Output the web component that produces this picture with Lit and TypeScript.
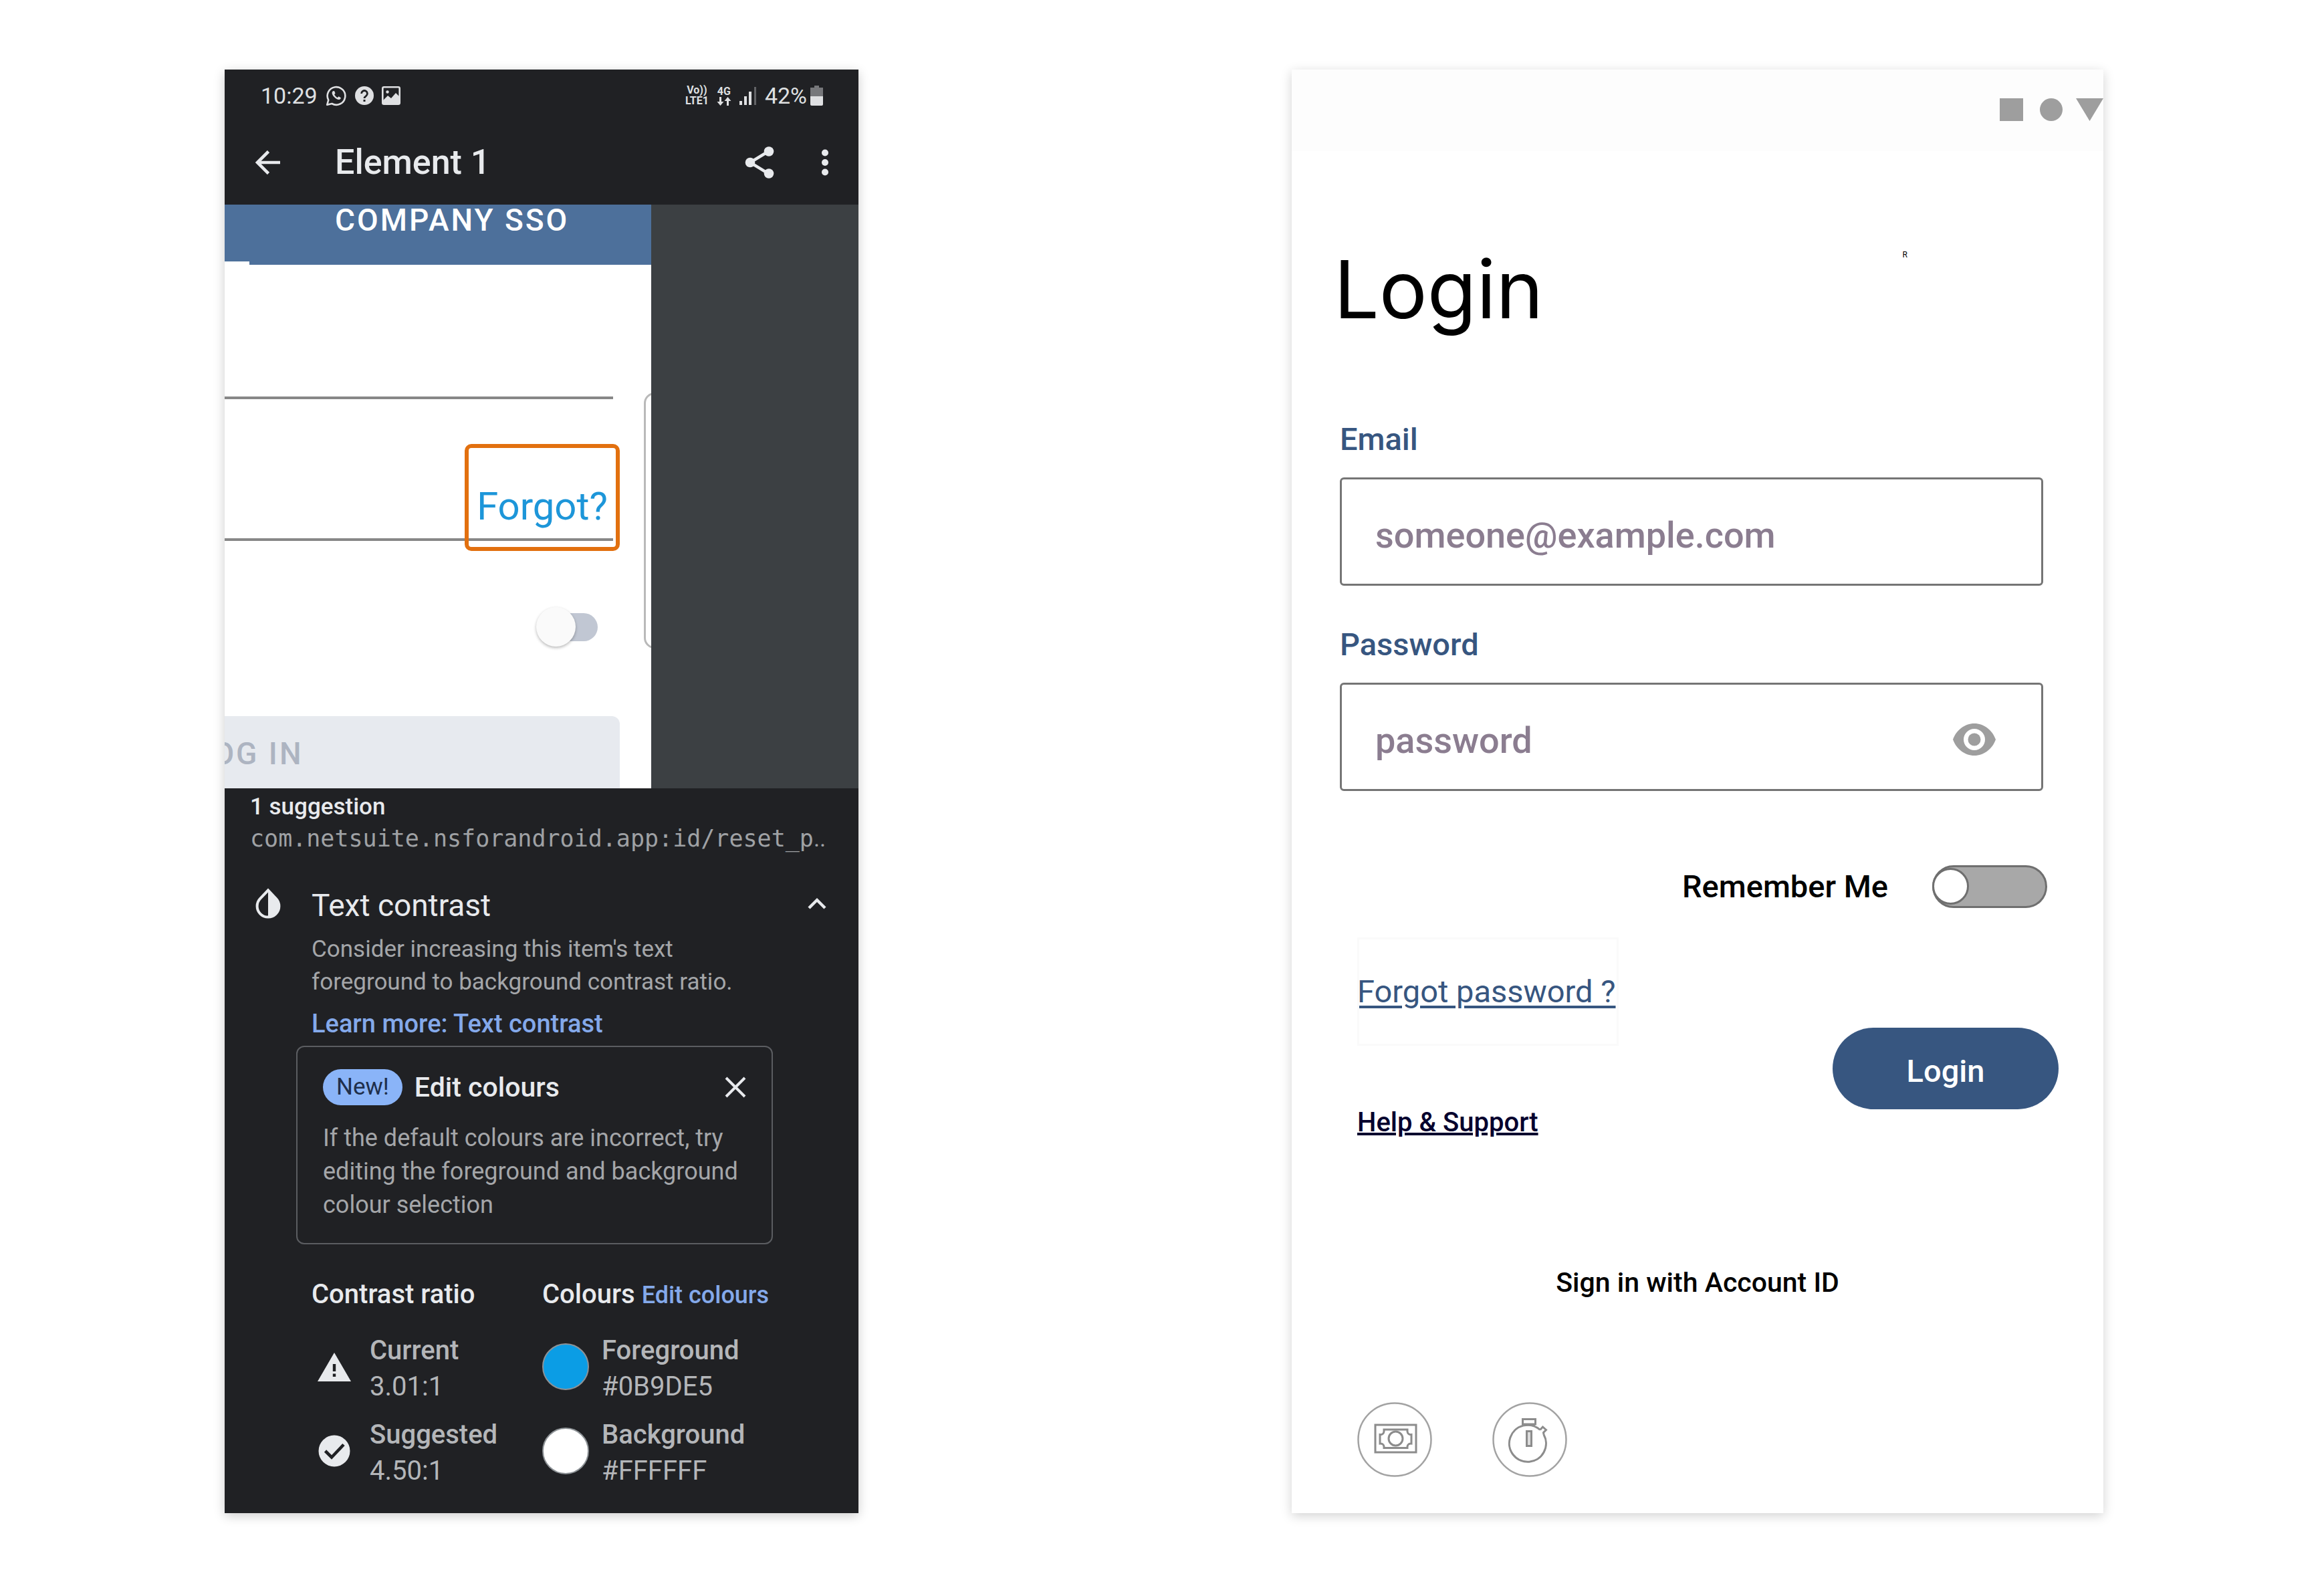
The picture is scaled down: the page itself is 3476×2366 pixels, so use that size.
import { LitElement, html, css, svg } from "lit";
import { customElement } from "lit/decorators.js";

const resets = css`
  :host {
    display: block;
    box-sizing: border-box;
    font-family: Roboto, "Liberation Sans", sans-serif;
  }
  *,
  *::before,
  *::after {
    box-sizing: border-box;
  }
  h1,
  h2,
  h3,
  p,
  dl,
  dd {
    margin: 0;
  }
  button {
    font: inherit;
    color: inherit;
    margin: 0;
    padding: 0;
    border: 0;
    background: none;
    cursor: pointer;
  }
  svg {
    display: block;
    flex: none;
  }
`;

const icons = {
  chat: svg`<svg width="32" height="32" viewBox="0 0 32 32" fill="none" stroke="currentColor" stroke-width="2.6" stroke-linejoin="round" aria-hidden="true">
    <path d="M2.2 29.8l2-7.2A13.3 13.3 0 1 1 9.4 28z"/>
    <path d="M11.2 9.2c-2.400 1.200-2 5 1.600 8.800s7.600 5.200 9.600 2.800l.5-1.500-3.300-2-1.800 1.600c-2-.8-3.700-2.600-4.700-4.700l1.400-1.700-1.500-3.400z" fill="currentColor" stroke="none"/>
  </svg>`,
  help: svg`<svg width="28" height="28" viewBox="0 0 28 28" aria-hidden="true">
    <circle cx="14" cy="14" r="14" fill="currentColor"/>
    <path d="M9.600 11a4.400 4.400 0 1 1 6.900 3.600c-1.600 1.100-2.500 1.700-2.500 3.400" fill="none" stroke="#202124" stroke-width="2.800"/>
    <rect x="12.500" y="20" width="3" height="3" fill="#202124"/>
  </svg>`,
  picture: svg`<svg width="28" height="28" viewBox="0 0 28 28" aria-hidden="true">
    <rect x="1.300" y="1.300" width="25.400" height="25.400" rx="2" fill="none" stroke="currentColor" stroke-width="2.600"/>
    <path d="M2 21l7-7 5 4 7-8 6 6v10H2z" fill="currentColor"/>
    <circle cx="8.500" cy="8.500" r="2.200" fill="currentColor"/>
  </svg>`,
  data: svg`<svg width="22" height="13" viewBox="0 0 22 13" fill="currentColor" aria-hidden="true">
    <path d="M4 0h3v7h3.500L5.500 13 0.500 7H4zM15 13h3V6h3.500L16.500 0 11.500 6H15z"/>
  </svg>`,
  signal: svg`<svg width="26" height="27" viewBox="0 0 26 27" fill="currentColor" aria-hidden="true">
    <rect x="0" y="21" width="4" height="6"/><rect x="7" y="14" width="4" height="13"/>
    <rect x="14" y="7" width="4" height="20"/><rect x="22" y="0" width="3" height="27" opacity=".35"/>
  </svg>`,
  battery: svg`<svg width="19" height="30" viewBox="0 0 19 30" aria-hidden="true">
    <path d="M6 0h7v3h6v14H0V3h6z" fill="#77787b"/><path d="M0 16h19v12q0 2-2 2H2q-2 0-2-2z" fill="currentColor"/>
  </svg>`,
  back: svg`<svg width="38" height="36" viewBox="0 0 38 36" fill="none" stroke="currentColor" stroke-width="4.600" aria-hidden="true">
    <path d="M37 18H3M19.500 1.500L3 18l16.500 16.500"/>
  </svg>`,
  share: svg`<svg width="44" height="48" viewBox="0 0 44 48" aria-hidden="true">
    <path d="M36 7L8 24l28 17" fill="none" stroke="currentColor" stroke-width="4.400"/>
    <g fill="currentColor"><circle cx="36" cy="7.500" r="7.300"/><circle cx="8" cy="24" r="7.300"/><circle cx="36" cy="40.500" r="7.300"/></g>
  </svg>`,
  more: svg`<svg width="12" height="40" viewBox="0 0 12 40" fill="currentColor" aria-hidden="true">
    <circle cx="6" cy="5.500" r="5"/><circle cx="6" cy="20" r="5"/><circle cx="6" cy="34.500" r="5"/>
  </svg>`,
  contrast: svg`<svg width="38" height="46" viewBox="0 0 38 46" aria-hidden="true">
    <path d="M19 3.500L7.400 15.600a16.400 16.400 0 1 0 23.200 0z" fill="none" stroke="currentColor" stroke-width="4"/>
    <path d="M19 3v41a17 17 0 0 0 12-28z" fill="currentColor"/>
  </svg>`,
  collapse: svg`<svg width="28" height="18" viewBox="0 0 28 18" fill="none" stroke="currentColor" stroke-width="4.400" aria-hidden="true">
    <path d="M2 16L14 4l12 12"/>
  </svg>`,
  close: svg`<svg width="32" height="32" viewBox="0 0 32 32" fill="none" stroke="currentColor" stroke-width="4" aria-hidden="true">
    <path d="M2 2l28 28M30 2L2 30"/>
  </svg>`,
  warning: svg`<svg width="50" height="43" viewBox="0 0 50 43" aria-hidden="true">
    <path d="M25 0l25 43H0z" fill="currentColor"/>
    <path d="M22.800 17h4.400v11h-4.400zM22.800 31.500h4.400v4.400h-4.400z" fill="#202124"/>
  </svg>`,
  check: svg`<svg width="48" height="48" viewBox="0 0 48 48" aria-hidden="true">
    <circle cx="24" cy="24" r="23.500" fill="currentColor"/>
    <path d="M10.500 24l9.500 9.500L38 14.500" fill="none" stroke="#202124" stroke-width="4.600"/>
  </svg>`,
  eye: svg`<svg width="64" height="48" viewBox="0 0 64 48" aria-hidden="true">
    <path d="M32 0C17.500 0 5 9.900 0 24c5 14.100 17.500 24 32 24s27-9.900 32-24C59 9.900 46.500 0 32 0zm0 40a16 16 0 1 1 0-32 16 16 0 0 1 0 32z" fill="currentColor"/>
    <circle cx="32" cy="24" r="9.500" fill="currentColor"/>
  </svg>`,
  cash: svg`<svg width="112" height="112" viewBox="0 0 112 112" fill="none" stroke="#8c8c8c" stroke-width="3" aria-hidden="true">
    <circle cx="56" cy="56" r="54.500" stroke="#a3a3a3" stroke-width="2.500"/>
    <rect x="27" y="34" width="61" height="41"/>
    <path d="M40 41h35v3a5 5 0 0 0 6 4.500V62a5 5 0 0 0-6 4.500V68.500H40v-2A5 5 0 0 0 34 62V48.500a5 5 0 0 0 6-4.500z"/>
    <circle cx="57.500" cy="54.500" r="10.500"/>
  </svg>`,
  timer: svg`<svg width="112" height="112" viewBox="0 0 112 112" fill="none" stroke="#8c8c8c" stroke-width="3" aria-hidden="true">
    <circle cx="56" cy="56" r="54.500" stroke="#a3a3a3" stroke-width="2.500"/>
    <rect x="45.500" y="25.500" width="19" height="7.500"/>
    <path d="M71.500 41.500A27.500 27.500 0 1 0 77 48.500M71.500 41.500l4-4.500 5 4.500-4 4 .5 3"/>
    <path d="M46 34h18"/>
    <rect x="51.500" y="43.500" width="7" height="22" fill="#dcdcdc"/>
  </svg>`,
};

/** Zoomed view of the inspected screen with the flagged item outlined. */
@customElement("inspected-screen")
class InspectedScreen extends LitElement {
  static styles = [
    resets,
    css`
      :host {
        background: #3c4043;
        overflow: hidden;
      }
      .screen {
        position: relative;
        width: 67.3%;
        height: 873px;
        overflow: hidden;
        background: #fff;
        display: flex;
        flex-direction: column;
      }
      .tab {
        position: relative;
        flex: none;
        height: 90px;
        padding-left: 165px;
        background: #4d709b;
        color: #fff;
        font-size: 46px;
        line-height: 46px;
        font-weight: 500;
        letter-spacing: 3px;
        white-space: nowrap;
      }
      .tab::after {
        content: "";
        position: absolute;
        left: 0;
        bottom: 0;
        width: 37px;
        height: 5px;
        background: #fff;
      }
      .line {
        flex: none;
        margin-right: 57px;
        border-bottom: 4px solid #878787;
      }
      .user {
        height: 201px;
      }
      .secret {
        height: 212px;
      }
      .flagged {
        position: absolute;
        top: 358px;
        right: 47px;
        width: 232px;
        height: 160px;
        padding-top: 26px;
        border: 6px solid #e2700f;
        border-radius: 10px;
        color: #1d96d9;
        font-size: 58px;
        line-height: 64px;
        text-align: center;
      }
      .neighbour {
        position: absolute;
        top: 281px;
        left: 627px;
        width: 60px;
        height: 383px;
        border: 3px solid #b9b9b9;
        border-radius: 16px;
      }
      .switch {
        appearance: none;
        flex: none;
        align-self: flex-end;
        position: relative;
        width: 86px;
        height: 42px;
        margin: 108px 80px 0 0;
        border-radius: 21px;
        background: #c1c7d3;
      }
      .switch::before {
        content: "";
        position: absolute;
        left: -6px;
        top: -9px;
        width: 59px;
        height: 59px;
        border-radius: 50%;
        background: #fafafa;
        box-shadow: 0 2px 4px rgba(0, 0, 0, 0.28);
      }
      .submit {
        flex: 1;
        margin: 112px 47px 0 -60px;
        padding: 4px 0 0 16px;
        border-radius: 12px 12px 0 0;
        background: #e7eaef;
        color: #adb4c1;
        font-size: 46px;
        line-height: 50px;
        font-weight: 500;
        letter-spacing: 3px;
        text-align: left;
      }
    `,
  ];

  render() {
    return html`
      <div class="screen">
        <div class="tab">COMPANY SSO</div>
        <div class="line user"></div>
        <div class="line secret"></div>
        <input class="switch" type="checkbox" role="switch" aria-label="Remember" />
        <button class="submit">LOG IN</button>
        <button class="flagged">Forgot?</button>
        <div class="neighbour"></div>
      </div>
    `;
  }
}

/** Accessibility scanner result for one element. */
@customElement("scanner-phone")
class ScannerPhone extends LitElement {
  static styles = [
    resets,
    css`
      :host {
        background: #202124;
        color: #e8eaed;
        box-shadow: 0 4px 16px rgba(0, 0, 0, 0.2);
      }
      .status {
        display: flex;
        align-items: center;
        gap: 12px;
        height: 78px;
        padding: 0 53px 0 54px;
        font-size: 34px;
        color: #dfe0e2;
      }
      .spacer {
        flex: 1;
      }
      .network {
        display: flex;
        flex-direction: column;
        align-items: center;
        font-size: 16px;
        line-height: 16px;
        font-weight: 700;
      }
      .charge {
        display: flex;
        align-items: center;
        gap: 5px;
      }
      .appbar {
        display: flex;
        align-items: center;
        height: 124px;
        padding: 0 44px 2px 46px;
      }
      .title {
        flex: 1;
        padding-left: 81px;
        font-size: 52px;
        line-height: 60px;
        font-weight: 500;
      }
      .appbar .overflow {
        margin-left: 70px;
      }
      .details {
        padding: 4px 48px 36px 38px;
      }
      .count {
        font-size: 35px;
        line-height: 48px;
        font-weight: 500;
      }
      .resource {
        font-family: "DejaVu Sans Mono", monospace;
        font-size: 35px;
        line-height: 46px;
        color: #9fa1a4;
        white-space: nowrap;
      }
      .cut {
        font-family: Roboto, sans-serif;
      }
      .issue {
        display: flex;
        align-items: center;
        margin-top: 46px;
        padding-left: 8px;
      }
      .issue svg {
        margin-bottom: 6px;
      }
      .issue-name {
        flex: 1;
        padding-left: 46px;
        font-size: 46px;
        line-height: 60px;
        font-weight: 400;
      }
      .body {
        padding-left: 92px;
      }
      .text {
        font-size: 36px;
        line-height: 49px;
        color: #a4a6a9;
      }
      .advice {
        margin-top: 11px;
        font-size: 35px;
      }
      .link {
        color: #84a9ea;
        font-size: 36px;
        font-weight: 500;
        line-height: 49px;
        text-decoration: none;
      }
      .learn {
        display: block;
        margin-top: 14px;
        font-size: 38px;
      }
      .tip {
        margin: 8px 80px 0 -23px;
        padding: 33px 38px 32px;
        border: 2px solid #5b5d61;
        border-radius: 12px;
      }
      .tip-head {
        display: flex;
        align-items: center;
      }
      .badge {
        padding: 0 20px;
        border-radius: 27px;
        background: #8ab4f8;
        color: #202f4b;
        font-size: 35px;
        line-height: 54px;
      }
      .tip-title {
        flex: 1;
        padding-left: 18px;
        font-size: 41px;
        line-height: 54px;
        font-weight: 500;
      }
      .tip-text {
        margin-top: 24px;
        line-height: 50px;
      }
      .results {
        display: grid;
        grid-template-columns: 345px 1fr;
        row-gap: 18px;
        margin-top: 50px;
      }
      .heading {
        margin-bottom: 13px;
        font-size: 40px;
        line-height: 50px;
        font-weight: 500;
        white-space: nowrap;
      }
      .entry {
        display: flex;
        gap: 19px;
        color: #b4b6b9;
        font-size: 40px;
        line-height: 54px;
      }
      .entry dt {
        font-weight: 500;
      }
      .mark {
        display: grid;
        place-items: center;
        width: 68px;
        height: 102px;
        color: #e8eaed;
      }
      .swatch {
        flex: none;
        width: 70px;
        height: 70px;
        margin-top: 16px;
        border: 2px solid #8d9296;
        border-radius: 50%;
      }
      .foreground {
        background: #0b9de5;
      }
      .background {
        background: #fff;
      }
    `,
  ];

  render() {
    return html`
      <div class="status">
        <span>10:29</span>
        ${icons.chat} ${icons.help} ${icons.picture}
        <span class="spacer"></span>
        <span class="network"><span>Vo))</span><span>LTE1</span></span>
        <span class="network"><span>4G</span>${icons.data}</span>
        ${icons.signal}
        <span class="charge">42% ${icons.battery}</span>
      </div>
      <header class="appbar">
        <button aria-label="Back">${icons.back}</button>
        <h1 class="title">Element 1</h1>
        <button aria-label="Share">${icons.share}</button>
        <button class="overflow" aria-label="More options">${icons.more}</button>
      </header>
      <inspected-screen></inspected-screen>
      <section class="details">
        <p class="count">1 suggestion</p>
        <p class="resource">com.netsuite.nsforandroid.app:id/reset_p<span class="cut">..</span></p>
        <div class="issue">
          ${icons.contrast}
          <h2 class="issue-name">Text contrast</h2>
          <button aria-label="Collapse">${icons.collapse}</button>
        </div>
        <div class="body">
          <p class="text advice">
            Consider increasing this item's text<br />foreground to background contrast ratio.
          </p>
          <a class="link learn" href="#contrast">Learn more: Text contrast</a>
          <div class="tip">
            <div class="tip-head">
              <span class="badge">New!</span>
              <h3 class="tip-title">Edit colours</h3>
              <button aria-label="Close">${icons.close}</button>
            </div>
            <p class="text tip-text">
              If the default colours are incorrect, try<br />editing the foreground and background<br />colour
              selection
            </p>
          </div>
          <div class="results">
            <h3 class="heading">Contrast ratio</h3>
            <h3 class="heading">Colours <a class="link" href="#edit">Edit colours</a></h3>
            ${this.entry(html`<span class="mark">${icons.warning}</span>`, "Current", "3.01:1")}
            ${this.entry(html`<span class="swatch foreground"></span>`, "Foreground", "#0B9DE5")}
            ${this.entry(html`<span class="mark">${icons.check}</span>`, "Suggested", "4.50:1")}
            ${this.entry(html`<span class="swatch background"></span>`, "Background", "#FFFFFF")}
          </div>
        </div>
      </section>
    `;
  }

  private entry(mark: unknown, name: string, value: string) {
    return html`<div class="entry">
      ${mark}
      <dl><dt>${name}</dt><dd>${value}</dd></dl>
    </div>`;
  }
}

/** Login form card. */
@customElement("login-card")
class LoginCard extends LitElement {
  static styles = [
    resets,
    css`
      :host {
        background: #fff;
        color: #000;
        box-shadow: 0 4px 16px rgba(0, 0, 0, 0.18);
      }
      .status {
        display: flex;
        justify-content: flex-end;
        height: 122px;
        padding-top: 43px;
        background: #fdfdfd;
      }
      .head {
        display: flex;
        justify-content: space-between;
        margin-top: 137px;
        padding: 0 293px 0 63px;
      }
      .title {
        font-family: Inter, sans-serif;
        font-size: 120px;
        line-height: 140px;
        font-weight: 400;
      }
      .note {
        margin-top: 12px;
        font-size: 12px;
        line-height: 12px;
      }
      .field {
        display: flex;
        flex-direction: column;
        gap: 29px;
        margin: 60px 90px 0 72px;
      }
      .first {
        margin-top: 126px;
      }
      .label {
        color: #375680;
        font-size: 47px;
        line-height: 56px;
        font-weight: 500;
      }
      .box {
        display: flex;
        align-items: center;
        height: 162px;
        padding: 0 68px 0 50px;
        border: 3px solid #757575;
        border-radius: 6px;
        color: #9e9e9e;
      }
      .reveal {
        padding-top: 8px;
      }
      .input {
        flex: 1;
        min-width: 0;
        padding: 12px 0 0;
        border: 0;
        outline: 0;
        background: none;
        color: #8b7d90;
        font: 500 54px/64px Roboto, sans-serif;
      }
      .input::placeholder {
        color: #8b7d90;
        opacity: 1;
      }
      .remember {
        display: flex;
        justify-content: flex-end;
        align-items: center;
        gap: 66px;
        margin-top: 111px;
        padding-right: 84px;
        font-size: 47px;
        line-height: 56px;
        font-weight: 500;
      }
      .toggle {
        appearance: none;
        position: relative;
        width: 172px;
        height: 64px;
        margin: 0;
        border: 3px solid #6f6f6f;
        border-radius: 32px;
        background: #a8a8a8;
      }
      .toggle::before {
        content: "";
        position: absolute;
        left: -3px;
        top: 1px;
        width: 55px;
        height: 55px;
        border: 3px solid #6f6f6f;
        border-radius: 50%;
        background: #fff;
      }
      .toggle:checked::before {
        left: auto;
        right: -3px;
      }
      .actions {
        display: flex;
        justify-content: space-between;
        align-items: flex-start;
        margin-top: 44px;
        padding: 0 67px 0 98px;
      }
      .links {
        display: flex;
        flex-direction: column;
        align-items: flex-start;
        gap: 90px;
      }
      .forgot {
        padding-right: 4px;
        outline: 3px solid #fafafa;
        outline-offset: -3px;
        color: #375680;
        font-size: 47px;
        line-height: 162px;
        text-underline-offset: 5px;
      }
      .help {
        color: #06002e;
        font-size: 40px;
        line-height: 50px;
        font-weight: 500;
      }
      .login {
        width: 338px;
        height: 122px;
        margin-top: 135px;
        padding-top: 8px;
        border-radius: 61px;
        background: #375680;
        color: #fff;
        font-size: 47px;
        line-height: 56px;
        font-weight: 500;
      }
      .account {
        display: block;
        margin: 189px auto 0;
        font-size: 41px;
        line-height: 50px;
        font-weight: 500;
      }
      .tools {
        display: flex;
        gap: 90px;
        margin-top: 154px;
        padding: 0 98px 53px;
      }
    `,
  ];

  render() {
    return html`
      <div class="status">
        <svg width="155" height="35" viewBox="0 0 155 35" fill="#9e9e9e" aria-hidden="true">
          <rect width="35" height="34" />
          <circle cx="77" cy="17" r="17" />
          <path d="M114 0h41l-20.500 34z" />
        </svg>
      </div>
      <div class="head">
        <h1 class="title">Login</h1>
        <span class="note">R</span>
      </div>
      <div class="field first">
        <label class="label" for="email">Email</label>
        <div class="box">
          <input class="input" id="email" type="email" placeholder="someone@example.com" />
        </div>
      </div>
      <div class="field">
        <label class="label" for="password">Password</label>
        <div class="box">
          <input class="input" id="password" type="password" placeholder="password" />
          <button class="reveal" aria-label="Show password">${icons.eye}</button>
        </div>
      </div>
      <div class="remember">
        <label for="remember">Remember Me</label>
        <input class="toggle" id="remember" type="checkbox" role="switch" />
      </div>
      <div class="actions">
        <div class="links">
          <a class="forgot" href="#forgot">Forgot password ?</a>
          <a class="help" href="#help">Help &amp; Support</a>
        </div>
        <button class="login">Login</button>
      </div>
      <button class="account">Sign in with Account ID</button>
      <div class="tools">
        <button aria-label="Expenses">${icons.cash}</button>
        <button aria-label="Time tracking">${icons.timer}</button>
      </div>
    `;
  }
}

@customElement("app-root")
class AppRoot extends LitElement {
  static styles = [
    resets,
    css`
      .page {
        display: grid;
        grid-template-columns: minmax(0, 948fr) minmax(0, 1214fr);
        column-gap: 648px;
        min-height: 100vh;
        padding: 104px 330px 104px 336px;
        background: #fff;
      }
    `,
  ];

  render() {
    return html`
      <main class="page">
        <scanner-phone></scanner-phone>
        <login-card></login-card>
      </main>
    `;
  }
}
